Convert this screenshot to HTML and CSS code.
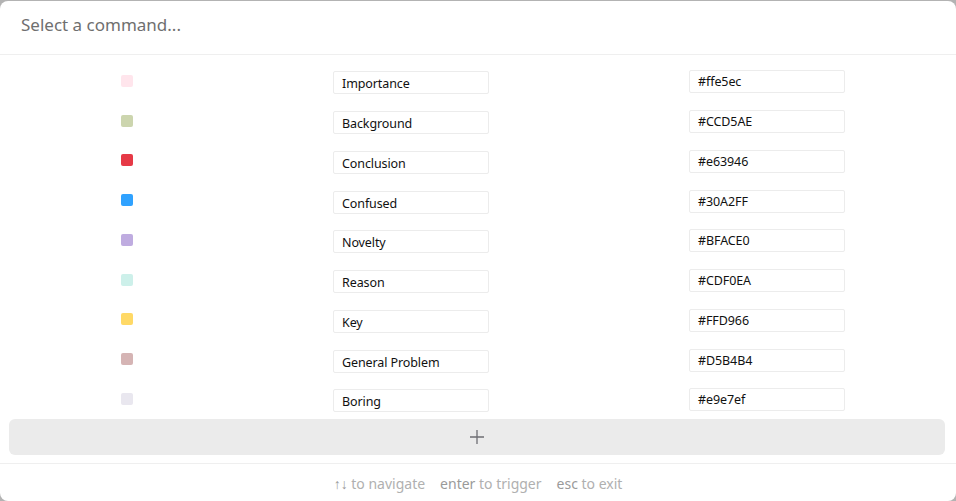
FILE: index.html
```html
<!DOCTYPE html>
<html>
<head>
<meta charset="utf-8">
<link rel="stylesheet" href="styles.css">
</head>
<body>
<div class="modal">
  <div class="search">Select a command...</div>
  <div class="list">
    <div class="row"><span class="sw" style="background:#ffe5ec"></span><span class="field">Importance</span><span class="field hex">#ffe5ec</span></div>
    <div class="row"><span class="sw" style="background:#CCD5AE"></span><span class="field">Background</span><span class="field hex">#CCD5AE</span></div>
    <div class="row"><span class="sw" style="background:#e63946"></span><span class="field">Conclusion</span><span class="field hex">#e63946</span></div>
    <div class="row"><span class="sw" style="background:#30A2FF"></span><span class="field">Confused</span><span class="field hex">#30A2FF</span></div>
    <div class="row"><span class="sw" style="background:#BFACE0"></span><span class="field">Novelty</span><span class="field hex">#BFACE0</span></div>
    <div class="row"><span class="sw" style="background:#CDF0EA"></span><span class="field">Reason</span><span class="field hex">#CDF0EA</span></div>
    <div class="row"><span class="sw" style="background:#FFD966"></span><span class="field">Key</span><span class="field hex">#FFD966</span></div>
    <div class="row"><span class="sw" style="background:#D5B4B4"></span><span class="field">General Problem</span><span class="field hex">#D5B4B4</span></div>
    <div class="row"><span class="sw" style="background:#e9e7ef"></span><span class="field">Boring</span><span class="field hex">#e9e7ef</span></div>
  </div>
  <div class="add">
    <svg width="16" height="16" viewBox="0 0 16 16"><path d="M8 1v14M1 8h14" stroke="#6e6e73" stroke-width="1.3" fill="none"/></svg>
  </div>
  <div class="footer">
    <span><span class="kbd">↑↓</span> to navigate</span>
    <span><span class="kbd">enter</span> to trigger</span>
    <span><span class="kbd">esc</span> to exit</span>
  </div>
</div>
</body>
</html>
```
FILE: styles.css
```css
html, body {
  margin: 0;
  padding: 0;
  background: #b3b3b3;
  height: 501px;
  overflow: hidden;
}
.modal {
  margin-top: 1px;
  height: 500px;
  background: #fff;
  border-radius: 8px;
  display: flex;
  flex-direction: column;
  font-family: "Noto Sans", "Open Sans", sans-serif;
}
.search {
  height: 47px;
  padding-bottom: 6px;
  border-bottom: 1px solid #efefef;
  padding-left: 21px;
  display: flex;
  align-items: center;
  font-size: 17px;
  color: #6f6f6f;
  box-sizing: content-box;
}
.list {
  height: 362px;
  overflow: hidden;
}
.row {
  height: 39.75px;
  display: grid;
  grid-template-columns: 333px 356px 156px;
  align-items: center;
}
.sw {
  width: 12px;
  height: 12px;
  border-radius: 2px;
  margin-left: 121px;
  margin-top: 12px;
}
.field {
  width: 156px;
  height: 23px;
  box-sizing: border-box;
  border: 1px solid #ececec;
  border-radius: 2px;
  padding-left: 8px;
  padding-top: 2px;
  font-size: 12.5px;
  letter-spacing: -0.1px;
  color: #111;
  display: flex;
  align-items: center;
  margin-top: 16px;
}
.field.hex {
  margin-top: 14px;
  padding-top: 0;
}
.add {
  margin: 2px 11px 0 9px;
  height: 36px;
  background: #ebebeb;
  border-radius: 6px;
  display: flex;
  align-items: center;
  justify-content: center;
}
.footer {
  margin-top: 8px;
  border-top: 1px solid #efefef;
  flex: 1;
  display: flex;
  justify-content: center;
  align-items: center;
  gap: 15px;
  font-size: 14px;
  color: #b0b0b0;
  padding-top: 2px;
}
.kbd {
  color: #9a9a9a;
}
```
